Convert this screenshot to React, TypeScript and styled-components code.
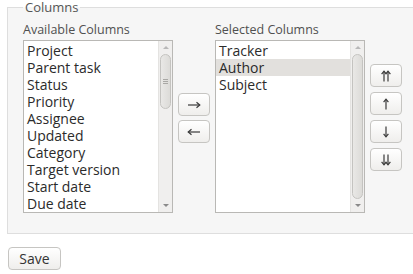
import styled, { createGlobalStyle } from "styled-components"

const GlobalStyle = createGlobalStyle`
  html, body {
    margin: 0;
    padding: 0;
    background: #fff;
    font-family: "Open Sans", "DejaVu Sans", sans-serif;
    color: #333;
    overflow: hidden;
  }
`

const Page = styled.div`
  width: 413px;
  height: 274px;
  padding-top: 1px;
  box-sizing: border-box;
  overflow: hidden;
`

const Fieldset = styled.fieldset`
  margin: 0 0 0 7px;
  padding: 8px 0 20px 15px;
  width: 440px;
  border: 1px solid #dedede;
  background: #f6f6f6;
  box-sizing: border-box;
`

const Legend = styled.legend`
  padding: 0 2px;
  font-size: 13px;
  line-height: 13px;
  color: #555;
`

const Row = styled.div`
  display: flex;
  align-items: center;
`

const Column = styled.div`
  display: flex;
  flex-direction: column;
`

const Label = styled.div`
  font-size: 12.5px;
  line-height: 15px;
  color: #505050;
  margin-bottom: 3px;
`

const ListBox = styled.div`
  width: 150px;
  height: 173px;
  box-sizing: border-box;
  border: 1px solid #b9b8b5;
  background: #fff;
  display: flex;
`

const Items = styled.div`
  flex: 1;
  padding-top: 1px;
  overflow: hidden;
`

const Item = styled.div<{ $selected?: boolean }>`
  height: 17px;
  line-height: 17px;
  padding-left: 3px;
  font-size: 14px;
  white-space: nowrap;
  color: #2b2b2b;
  background: ${(p) => (p.$selected ? "#e2e0dd" : "transparent")};
`

const Scrollbar = styled.div`
  width: 13px;
  display: flex;
  flex-direction: column;
  background: #f0efee;
  border-left: 1px solid #e4e3e1;
`

const ScrollArrow = styled.div<{ $down?: boolean }>`
  height: 13px;
  display: flex;
  align-items: center;
  justify-content: center;
  &::after {
    content: "";
    border-left: 3px solid transparent;
    border-right: 3px solid transparent;
    ${(p) => (p.$down ? "border-top: 3px solid #8a8a8a;" : "border-bottom: 3px solid #b8b8b8;")}
  }
`

const Track = styled.div`
  flex: 1;
  display: flex;
  flex-direction: column;
  padding: 0 1px;
`

const Thumb = styled.div<{ $size: string }>`
  height: ${(p) => p.$size};
  box-sizing: border-box;
  border: 1px solid #c4c3c0;
  border-radius: 6px;
  background: linear-gradient(to right, #e9e8e6, #dcdbd8);
  display: flex;
  align-items: center;
  justify-content: center;
`

const Grip = styled.div`
  width: 5px;
  height: 5px;
  background: repeating-linear-gradient(to bottom, #a9a8a5 0 1px, transparent 1px 2px);
`

const Buttons = styled.div<{ $gap: number; $top: number }>`
  display: flex;
  flex-direction: column;
  gap: ${(p) => p.$gap}px;
  margin: ${(p) => p.$top}px 5px 0 5px;
`

const ArrowButton = styled.button`
  width: 32px;
  height: 23px;
  padding: 0;
  border: 1px solid #c6c5c2;
  border-radius: 4px;
  background: linear-gradient(to bottom, #ffffff, #efeeec);
  display: flex;
  align-items: center;
  justify-content: center;
`

const SaveButton = styled.button`
  margin: 13px 0 0 8px;
  width: 53px;
  height: 23px;
  padding: 0;
  border: 1px solid #c6c5c2;
  border-radius: 4px;
  background: linear-gradient(to bottom, #ffffff, #efeeec);
  font-family: "Open Sans", sans-serif;
  font-size: 14px;
  color: #333;
`

type Dir = "right" | "left" | "top" | "up" | "down" | "bottom"

// small arrow glyphs drawn like the text arrows of the original buttons
function Arrow({ dir }: { dir: Dir }) {
  const stroke = { stroke: "#3a3a3a", strokeWidth: 1.2, fill: "none" }
  if (dir === "right" || dir === "left") {
    const t = dir === "left" ? "scale(-1,1) translate(-14,0)" : undefined
    return (
      <svg width="14" height="8" viewBox="0 0 14 8">
        <g transform={t} {...stroke}>
          <path d="M1 4H12.5" />
          <path d="M9.5 1.2L12.8 4L9.5 6.8" />
        </g>
      </svg>
    )
  }
  const double = dir === "top" || dir === "bottom"
  const flip = dir === "down" || dir === "bottom" ? "scale(1,-1) translate(0,-12)" : undefined
  const xs = double ? [3, 7] : [5]
  return (
    <svg width="10" height="12" viewBox="0 0 10 12">
      <g transform={flip} {...stroke}>
        {xs.map((x) => (
          <g key={x}>
            <path d={`M${x} 1.5V11.5`} />
            <path d={`M${x - 2.4} 4.2L${x} 1.2L${x + 2.4} 4.2`} />
          </g>
        ))}
      </g>
    </svg>
  )
}

const available = [
  "Project",
  "Parent task",
  "Status",
  "Priority",
  "Assignee",
  "Updated",
  "Category",
  "Target version",
  "Start date",
  "Due date",
]

const selected = ["Tracker", "Author", "Subject"]

interface ListProps {
  items: string[]
  active?: string
  thumb: string
  grip?: boolean
}

function List({ items, active, thumb, grip }: ListProps) {
  return (
    <ListBox>
      <Items>
        {items.map((item) => (
          <Item key={item} $selected={item === active}>
            {item}
          </Item>
        ))}
      </Items>
      <Scrollbar>
        <ScrollArrow />
        <Track>
          <Thumb $size={thumb}>{grip && <Grip />}</Thumb>
        </Track>
        <ScrollArrow $down />
      </Scrollbar>
    </ListBox>
  )
}

export default function App() {
  return (
    <Page>
      <GlobalStyle />
      <Fieldset>
        <Legend>Columns</Legend>
        <Row>
          <Column>
            <Label>Available Columns</Label>
            <List items={available} thumb="55px" grip />
          </Column>
          <Buttons $gap={4} $top={1}>
            <ArrowButton><Arrow dir="right" /></ArrowButton>
            <ArrowButton><Arrow dir="left" /></ArrowButton>
          </Buttons>
          <Column>
            <Label>Selected Columns</Label>
            <List items={selected} active="Author" thumb="100%" />
          </Column>
          <Buttons $gap={5} $top={0}>
            <ArrowButton><Arrow dir="top" /></ArrowButton>
            <ArrowButton><Arrow dir="up" /></ArrowButton>
            <ArrowButton><Arrow dir="down" /></ArrowButton>
            <ArrowButton><Arrow dir="bottom" /></ArrowButton>
          </Buttons>
        </Row>
      </Fieldset>
      <SaveButton>Save</SaveButton>
    </Page>
  )
}
